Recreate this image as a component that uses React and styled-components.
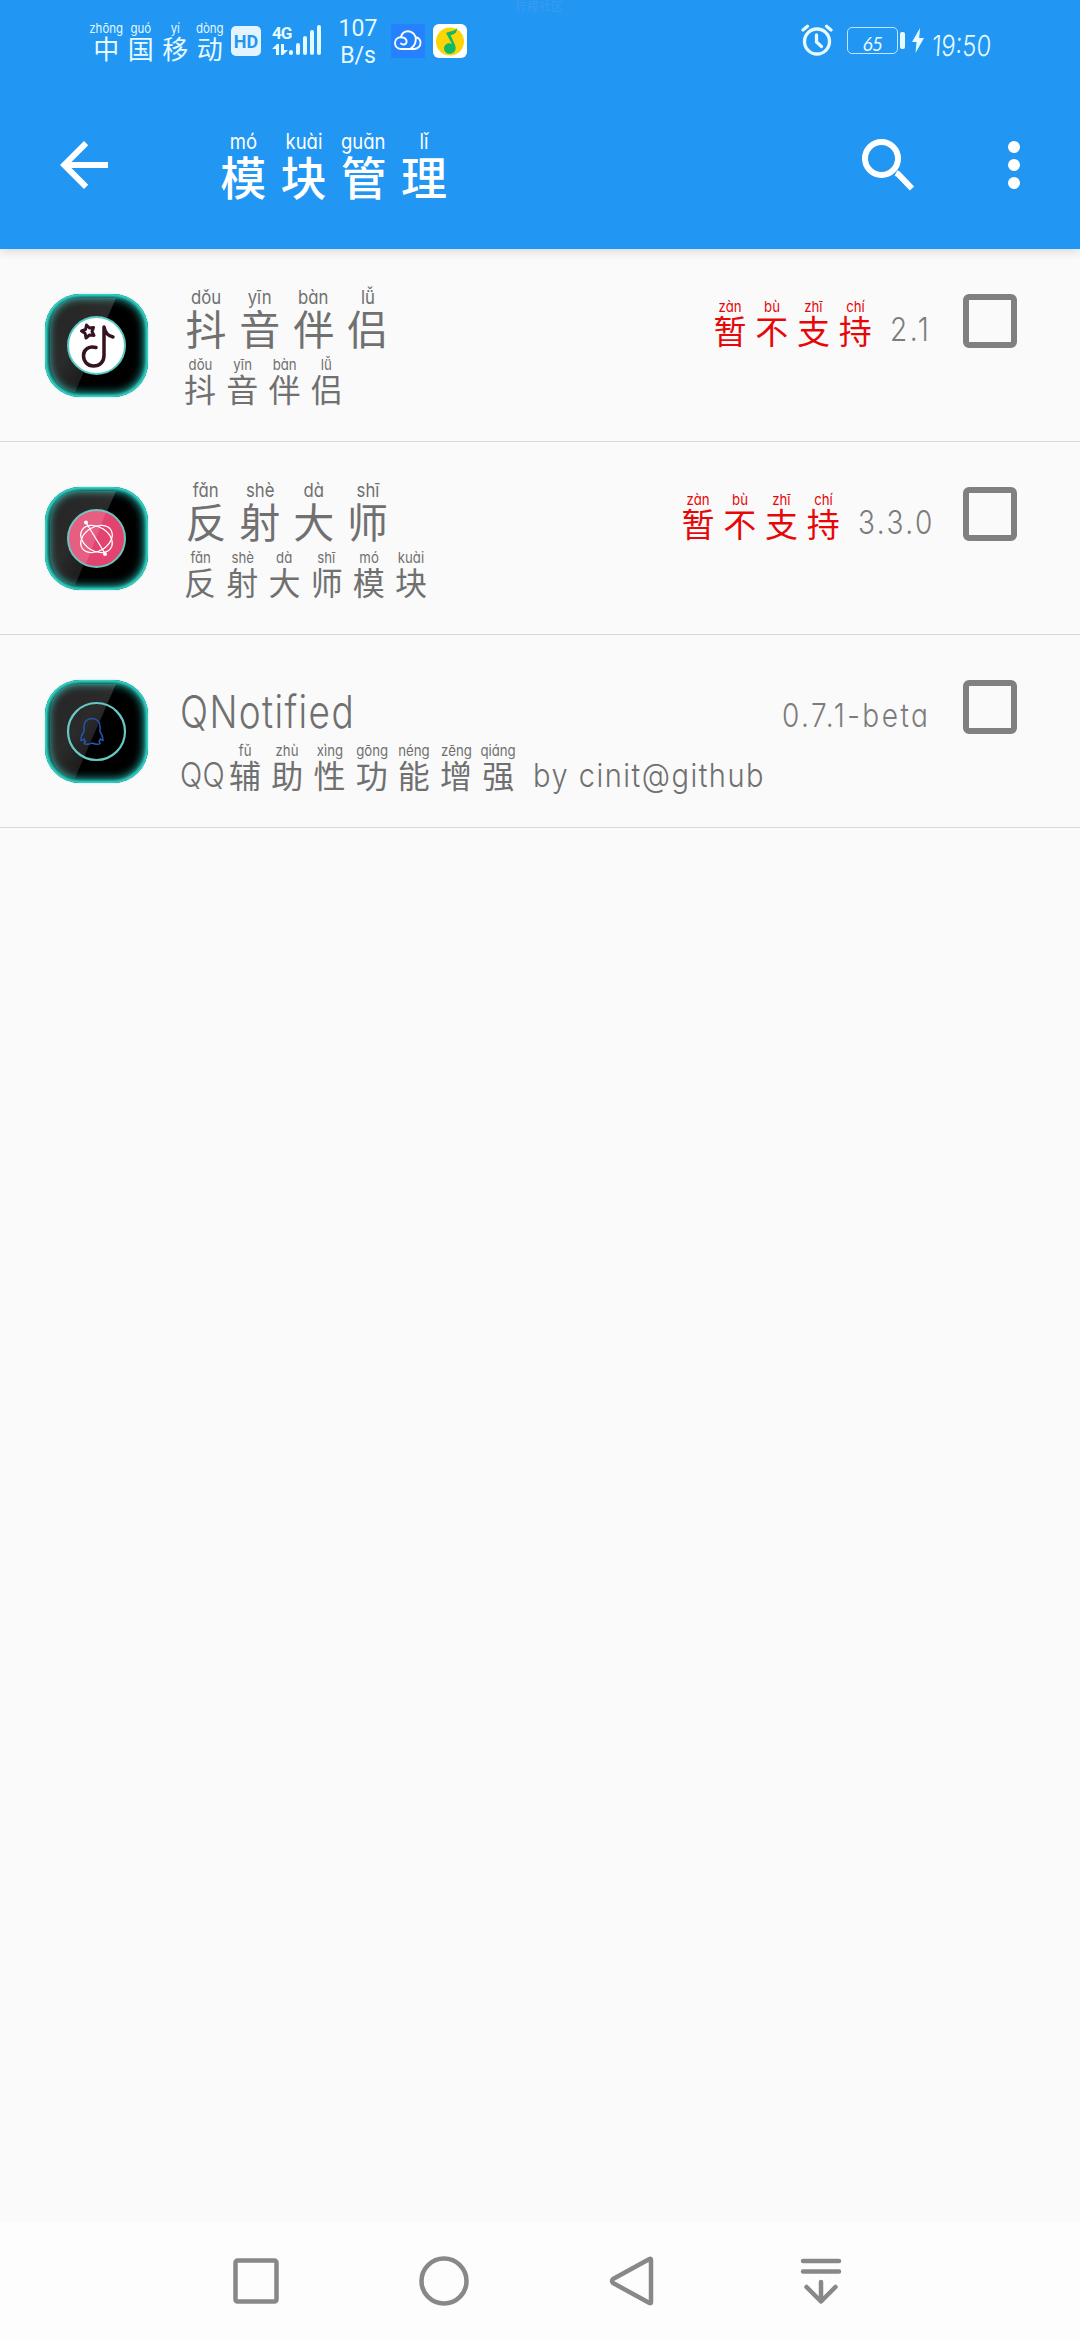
import React from 'react'
import styled, { createGlobalStyle } from 'styled-components'

const carrier = [['中', 'zhōng'], ['国', 'guó'], ['移', 'yí'], ['动', 'dòng']]
const title = [['模', 'mó'], ['块', 'kuài'], ['管', 'guǎn'], ['理', 'lǐ']]
const unsupported = [['暂', 'zàn'], ['不', 'bù'], ['支', 'zhī'], ['持', 'chí']]

const modules = [
  {
    id: 'douyin',
    name: [['抖', 'dǒu'], ['音', 'yīn'], ['伴', 'bàn'], ['侣', 'lǚ']],
    desc: [['抖', 'dǒu'], ['音', 'yīn'], ['伴', 'bàn'], ['侣', 'lǚ']],
    version: '2.1',
    versionWidth: 39,
    supported: false,
  },
  {
    id: 'reflect',
    name: [['反', 'fǎn'], ['射', 'shè'], ['大', 'dà'], ['师', 'shī']],
    desc: [['反', 'fǎn'], ['射', 'shè'], ['大', 'dà'], ['师', 'shī'], ['模', 'mó'], ['块', 'kuài']],
    version: '3.3.0',
    versionWidth: 71,
    supported: false,
  },
  {
    id: 'qnotified',
    latinName: 'QNotified',
    prefix: 'QQ',
    desc: [['辅', 'fǔ'], ['助', 'zhù'], ['性', 'xìng'], ['功', 'gōng'], ['能', 'néng'], ['增', 'zēng'], ['强', 'qiáng']],
    suffix: 'by cinit@github',
    version: '0.7.1-beta',
    versionWidth: 147,
    supported: true,
  },
]

const Pinyin = ({ chars, ...props }) => (
  <PinyinText {...props}>
    {chars.map(([char, sound], i) => (
      <PinyinCell key={i}>
        <Sound>{sound}</Sound>
        <Glyph>{char}</Glyph>
      </PinyinCell>
    ))}
  </PinyinText>
)

const SignalIcon = () => (
  <svg width="50" height="32" viewBox="0 0 50 32" fill="#e6fbff">
    <path d="M0 25l5-5h2v11H4v-6zM9 20h3v6h4l-5 5H9z" />
    <rect x="17" y="26" width="4" height="5" rx="2" />
    <rect x="24" y="19" width="4" height="12" rx="2" />
    <rect x="31" y="12" width="4" height="19" rx="2" />
    <rect x="38" y="6" width="4" height="25" rx="2" />
    <rect x="45" y="1" width="4" height="30" rx="2" />
  </svg>
)

const CloudIcon = () => (
  <svg width="34" height="34" viewBox="0 0 34 34" fill="none">
    <rect width="34" height="34" fill="#2681ff" />
    <g stroke="#fff" strokeWidth="1.900" strokeLinecap="round">
      <path d="M10 19.500c1.500 1.800 5 1.200 5.500-1.300.5-3-2.200-5-5.500-5-3.800 0-6 2.600-6 5.800 0 3.400 2.600 6 6.500 6H23c3.700 0 6.500-2.600 6.500-6 0-2.800-1.800-5-4-5.500" />
      <path d="M10 13c.8-3.500 3.600-5.800 7-5.800 4.500 0 7.800 3.600 7.800 8 0 4-2 7.300-5.300 9.500" />
    </g>
  </svg>
)

const MusicIcon = () => (
  <svg width="34" height="34" viewBox="0 0 34 34">
    <rect width="34" height="34" rx="6" fill="#fff" />
    <circle cx="17" cy="17.500" r="14" fill="#fbd507" />
    <path d="M24 4c-2 3-6 3-11 5l6 11c-3-2-8 0-8 4.500 0 4 4 6 7.500 5 4-1 5-5 3.500-8.500L17.500 11c3 0 6.500-2 6.500-7z" fill="#10b968" />
  </svg>
)

const AlarmIcon = () => (
  <svg width="32" height="32" viewBox="0 0 32 32" fill="none" stroke="#e6fbff" strokeLinecap="round">
    <circle cx="16" cy="17.500" r="12.500" strokeWidth="3.300" />
    <path d="M2 6l4.500-3.800M30 6l-4.500-3.800" strokeWidth="3.200" />
    <path d="M15.500 11v7l5 4.500" strokeWidth="3.300" />
  </svg>
)

const BoltIcon = () => (
  <svg width="12" height="25" viewBox="0 0 12 25" fill="#e6fbff">
    <path d="M8 0L0 14h4.500L3.500 25 12 10H7.200z" />
  </svg>
)

const BackIcon = () => (
  <svg width="72" height="72" viewBox="0 0 24 24" fill="#fff">
    <path d="M20 11H7.830l5.590-5.590L12 4l-8 8 8 8 1.410-1.410L7.830 13H20v-2z" />
  </svg>
)

const SearchIcon = () => (
  <svg width="54" height="54" viewBox="0 0 54 54" fill="none" stroke="#fff" strokeWidth="6">
    <circle cx="20.500" cy="20.500" r="16.500" />
    <path d="M35 35l2 1 14 14.500" />
  </svg>
)

const MoreIcon = () => (
  <svg width="12" height="48" viewBox="0 0 12 48" fill="#fff">
    <circle cx="6" cy="6" r="6" />
    <circle cx="6" cy="24" r="6" />
    <circle cx="6" cy="42" r="6" />
  </svg>
)

const DouyinMark = () => (
  <>
    <circle cx="51.500" cy="51.500" r="28.500" fill="#fff" stroke="#56c9c2" strokeWidth="2" />
    <g fill="none" stroke="#351320" strokeLinejoin="round" strokeLinecap="round">
      <path d="M51 53.500c-7-2-12.500 2-12.500 8 0 6 4 10.500 10 10.500s10.500-4 10.500-10.500V33c1 5 4 9 9 10" strokeWidth="3.500" />
      <path d="M41.500 31l3 3 4-.5-1.500 4 2 4-4.500-.5-3.500 3-.8-4.500-3.700-2.500 4-1.500z" strokeWidth="3" />
    </g>
  </>
)

const ReflectMark = () => (
  <>
    <circle cx="51.500" cy="51.500" r="28.500" fill="#e3446f" stroke="#6cc5c0" strokeWidth="2" />
    <path d="M61 25a28 28 0 0 0-37 30 28 28 0 0 0 17 22z" fill="#fff" opacity=".14" />
    <g fill="none" stroke="#fff" strokeWidth="1.300">
      <ellipse cx="51.500" cy="52" rx="17" ry="12" transform="rotate(32 51.500 52)" />
      <ellipse cx="51.500" cy="52" rx="17" ry="12" transform="rotate(-32 51.500 52)" />
      <path d="M41 35.500l19 31" />
    </g>
    <circle cx="41" cy="35.500" r="2" fill="#fff" />
    <circle cx="60" cy="67" r="2" fill="#fff" />
  </>
)

const QqMark = () => (
  <>
    <circle cx="51.500" cy="51.500" r="28.500" fill="none" stroke="#67c9c2" strokeWidth="2.200" />
    <path
      d="M47 38.500c-5 0-8 3.500-8 8v5c-2 3-3.500 6-3 9 1.500 0 2.500-1 3-1.500l1.500 2.500c-2 1-1.500 2.500 0 2.500 3 .5 5 0 6.500-1 2 1 4 1.500 7 1 1.500-.5 1.500-1.500 0-2.500l1.500-2.500c1 1 1.500 1.500 2.500 1.500 0-3-1-6-3-9v-5c0-4.500-3-8-8-8z"
      fill="none"
      stroke="#2457ab"
      strokeWidth="1.500"
    />
  </>
)

const marks = { douyin: DouyinMark, reflect: ReflectMark, qnotified: QqMark }

const AppIcon = ({ id }) => {
  const Mark = marks[id]
  return (
    <Tile>
      <svg width="103" height="103" viewBox="0 0 103 103">
        <defs>
          <linearGradient id={`gloss-${id}`} x1="0" y1="0" x2=".8" y2="1">
            <stop offset="0" stopColor="#fff" stopOpacity=".14" />
            <stop offset=".5" stopColor="#fff" stopOpacity=".17" />
            <stop offset="1" stopColor="#fff" stopOpacity=".06" />
          </linearGradient>
        </defs>
        <path d="M71 4H36C14 4 5 18 5 36v30c0 17 9 30 25 32z" fill={`url(#gloss-${id})`} />
        <Mark />
      </svg>
    </Tile>
  )
}

const StatusBar = () => (
  <StatusStyles>
    <Watermark>柠檬社区</Watermark>
    <Pinyin chars={carrier} $cell={34.500} $size={26} $sound={13} $weight={400} $height={38} />
    <HdBadge>HD</HdBadge>
    <Network>
      <NetworkType>4G</NetworkType>
      <SignalIcon />
    </Network>
    <Speed>
      <span>107</span>
      <span>B/s</span>
    </Speed>
    <Notices>
      <CloudIcon />
      <MusicIcon />
    </Notices>
    <StatusRight>
      <AlarmIcon />
      <Battery>
        <BatteryBody>65</BatteryBody>
        <BatteryCap />
      </Battery>
      <BoltIcon />
      <Clock>19:50</Clock>
    </StatusRight>
  </StatusStyles>
)

const ModuleRow = ({ module }) => (
  <RowStyles>
    <AppIcon id={module.id} />
    <Info>
      <NameLine>
        {module.name
          ? <Pinyin chars={module.name} $cell={53.900} $size={41} $sound={19} $height={59} />
          : <LatinBox $width={173}><Latin $size={45} $scale={0.82} $spacing={1.700}>{module.latinName}</Latin></LatinBox>}
      </NameLine>
      <DescLine>
        {module.prefix && <LatinBox $width={45}><Latin $size={34} $scale={0.86} $spacing={0.500}>{module.prefix}</Latin></LatinBox>}
        <Pinyin chars={module.desc} $cell={42.200} $size={32} $sound={15} $height={47} />
        {module.suffix && <Suffix><Latin $size={33} $scale={0.88} $spacing={1.700}>{module.suffix}</Latin></Suffix>}
      </DescLine>
    </Info>
    <Meta>
      {!module.supported && (
        <Pinyin chars={unsupported} $cell={41.700} $size={33} $sound={15} $height={48} $color="#e60808" $weight={400} />
      )}
      <Version $width={module.versionWidth}>
        <Latin $size={33} $scale={0.85} $spacing={2.900}>{module.version}</Latin>
      </Version>
    </Meta>
    <Checkbox type="button" role="checkbox" aria-checked="false" aria-label={module.id} />
  </RowStyles>
)

const NavBar = () => (
  <NavStyles>
    <NavButton aria-label="recents">
      <svg width="52" height="52" viewBox="0 0 52 52"><rect x="5.500" y="5.500" width="41" height="41" rx="2" /></svg>
    </NavButton>
    <NavButton aria-label="home">
      <svg width="52" height="52" viewBox="0 0 52 52"><circle cx="26" cy="26" r="22.500" /></svg>
    </NavButton>
    <NavButton aria-label="back">
      <svg width="52" height="52" viewBox="0 0 52 52"><path d="M43.500 4q1.500-1 1.500 1v42q0 2-1.500 1L7 28q-2-2 0-4z" /></svg>
    </NavButton>
    <NavButton aria-label="notifications">
      <svg width="52" height="52" viewBox="0 0 52 52"><path d="M9 6h36M9 16.500h36M27 27v19M12.500 32L27 46.500 41.500 32" /></svg>
    </NavButton>
  </NavStyles>
)

const App = () => {
  return (
    <Screen>
      <GlobalStyle />
      <Header>
        <StatusBar />
        <Toolbar>
          <BackIcon />
          <ToolbarTitle>
            <Pinyin chars={title} $cell={60.300} $size={46} $sound={21} $height={67} $weight={500} $color="#fff" />
          </ToolbarTitle>
          <SearchIcon />
          <MoreIcon />
        </Toolbar>
      </Header>
      <List>
        {modules.map(module => <ModuleRow key={module.id} module={module} />)}
      </List>
      <NavBar />
    </Screen>
  )
}

const GlobalStyle = createGlobalStyle`
  * {
    box-sizing: border-box;
  }

  body {
    margin: 0;
    background-color: #fafafa;
    font-family: Inter, "Noto Sans CJK SC", sans-serif;
    color: #707070;
  }

  svg {
    display: block;
    flex-shrink: 0;
  }
`

const Screen = styled.div`
  width: 1080px;
  height: 2340px;
  display: flex;
  flex-direction: column;
  overflow: hidden;
`

const Header = styled.header`
  position: relative;
  height: 249px;
  background-color: #2196f3;
  box-shadow: 0 2px 10px rgba(0, 0, 0, .15);
`

const StatusStyles = styled.div`
  position: relative;
  height: 81px;
  display: flex;
  align-items: flex-start;
  padding: 22px 87px 0 89px;
  color: #e6fbff;
`

const Watermark = styled.span`
  position: absolute;
  top: 0;
  left: 515px;
  font-size: 12px;
  line-height: 14px;
  color: #389cf1;
`

const PinyinText = styled.div`
  display: flex;
  height: ${({ $height }) => $height}px;
  color: ${({ $color }) => $color || 'inherit'};
  font-weight: ${({ $weight }) => $weight || 400};

  > span {
    width: ${({ $cell }) => $cell}px;
    font-size: ${({ $size }) => $size}px;
  }

  > span > span:first-child {
    font-size: ${({ $sound }) => $sound}px;
  }
`

const PinyinCell = styled.span`
  flex-shrink: 0;
  height: 100%;
  display: flex;
  flex-direction: column;
  align-items: center;
  justify-content: space-between;
  white-space: nowrap;
`

const Sound = styled.span`
  line-height: 1;
  font-weight: 400;
  font-feature-settings: "cv11";
  transform: scaleX(.88);
`

const Glyph = styled.span`
  line-height: 1;
  font-family: "Noto Sans CJK SC", sans-serif;
`

const HdBadge = styled.span`
  width: 30px;
  height: 30px;
  margin: 4px 0 0 4px;
  border-radius: 5px;
  background-color: #e3f4ff;
  color: #2196f3;
  font: 700 18px/31px Roboto, sans-serif;
  text-align: center;
`

const Network = styled.div`
  position: relative;
  margin: 2px 0 0 11px;
`

const NetworkType = styled.span`
  position: absolute;
  top: 0;
  left: 0;
  font: 700 17px/18px Roboto, sans-serif;
  letter-spacing: -1px;
`

const Speed = styled.div`
  width: 50px;
  margin: -7px 0 0 11px;
  display: flex;
  flex-direction: column;
  align-items: center;
  font: 400 23px/27px Roboto, sans-serif;
`

const Notices = styled.div`
  display: flex;
  gap: 8px;
  margin: 2px 0 0 8px;
`

const StatusRight = styled.div`
  display: flex;
  align-items: center;
  height: 32px;
  margin: 2px 0 0 auto;
`

const Battery = styled.div`
  display: flex;
  align-items: center;
  gap: 2px;
  margin: 0 7px 0 14px;
`

const BatteryBody = styled.span`
  width: 51px;
  height: 27px;
  border: 1.5px solid #bfe6fd;
  border-radius: 5px;
  font: italic 400 19px/32px Lato, sans-serif;
  letter-spacing: -.5px;
  text-align: center;
`

const BatteryCap = styled.span`
  width: 5px;
  height: 17px;
  border-radius: 2px;
  background-color: #e6fbff;
`

const Clock = styled.span`
  width: 61px;
  margin: 12px 0 0 8px;
  font: 300 29px/30px Inter, sans-serif;
  white-space: nowrap;
  transform: scaleX(.82) skewX(-4deg);
  transform-origin: left center;
`

const Toolbar = styled.div`
  height: 168px;
  display: flex;
  align-items: center;
  padding: 0 60px 0 48px;

  > svg:last-child {
    margin-left: 93px;
  }
`

const ToolbarTitle = styled.h1`
  flex: 1;
  margin: 0 0 2px 93px;
  font-size: inherit;
`

const List = styled.ul`
  flex: 1;
  margin: 0;
  padding: 0;
  list-style: none;
`

const RowStyles = styled.li`
  height: 193px;
  display: flex;
  align-items: flex-start;
  padding: 45px 63px 0 45px;
  border-bottom: 1px solid #d9d9d9;
`

const Tile = styled.div`
  width: 103px;
  height: 103px;
  flex-shrink: 0;
  border-radius: 35px;
  background-color: #000;
  box-shadow: inset 0 0 3px 2px #35dccf, inset 0 0 8px 4px #22b5aa, 0 0 2px #8be0da;
`

const Info = styled.div`
  flex: 1;
  min-width: 0;
  margin: -6px 0 0 31px;
`

const NameLine = styled.div`
  height: 67px;
`

const DescLine = styled.div`
  display: flex;
  height: 49px;
  align-items: flex-end;
`

const Latin = styled.span`
  display: block;
  width: max-content;
  font-size: ${({ $size }) => $size}px;
  font-weight: 300;
  line-height: 1.200;
  letter-spacing: ${({ $spacing }) => $spacing}px;
  font-feature-settings: "cv11";
  white-space: nowrap;
  transform: scaleX(${({ $scale }) => $scale});
  transform-origin: left center;
`

const LatinBox = styled.div`
  width: ${({ $width }) => $width}px;
  margin-bottom: -6px;
  padding-left: 1px;

  ${NameLine} & {
    padding-top: 11px;
  }
`

const Suffix = styled.div`
  width: 230px;
  margin: 0 0 -6px 14px;
`

const Meta = styled.div`
  display: flex;
  align-items: flex-end;
  height: 56px;

  > ${PinyinText} {
    margin-bottom: 3px;
  }
`

const Version = styled.div`
  width: ${({ $width }) => $width}px;
  margin-left: 14px;
  color: #7c7c7c;
`

const Checkbox = styled.button`
  width: 54px;
  height: 54px;
  margin-left: 34px;
  padding: 0;
  flex-shrink: 0;
  border: 6px solid #808080;
  border-radius: 6px;
  background: none;
`

const NavStyles = styled.nav`
  height: 118px;
  display: flex;
  padding-left: 162px;
  background-color: #fdfdfd;
`

const NavButton = styled.button`
  width: 188px;
  padding: 0;
  display: flex;
  align-items: center;
  justify-content: center;
  border: 0;
  background: none;

  svg {
    fill: none;
    stroke: #888;
    stroke-width: 4.500px;
    stroke-linecap: round;
    stroke-linejoin: round;
  }
`

export default App
